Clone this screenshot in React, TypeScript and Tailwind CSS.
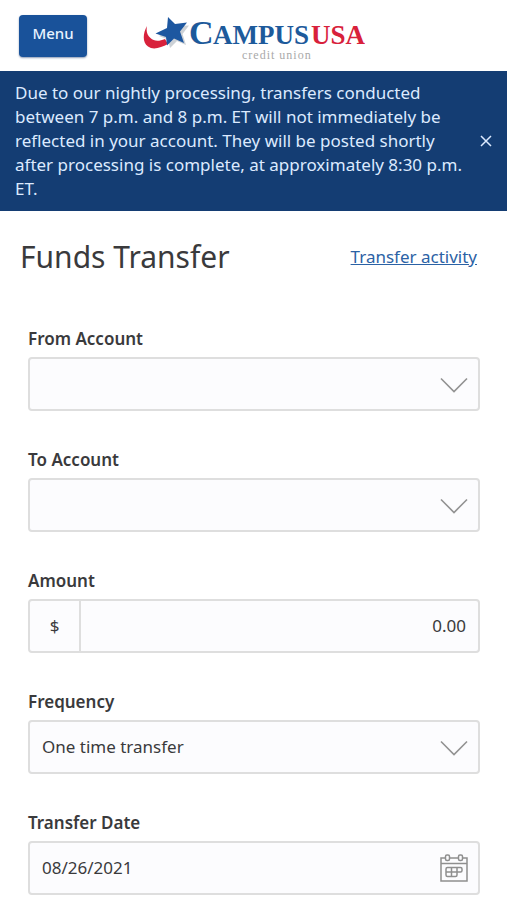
import { useState } from "react";
import type { ReactNode } from "react";

const boxClass =
  "flex h-[54px] w-full rounded-sm border-2 border-[#dedede] bg-[#fcfcfe]";

function Logo() {
  return (
    <svg
      width="222"
      height="54"
      viewBox="0 -2 222 54"
      role="img"
      aria-label="Campus USA credit union"
    >
      <path
        d="M4 15C0 22 -1 31 5 35.500C10.500 39.500 18 36.500 25 33L22 28C16 30.500 11 30.500 7.500 27C4 24 3 20 4 15Z"
        fill="#d8213b"
      />
      <path
        d="M27 9L34.500 15L46 14.500L39.500 23L43 34L34 30L27 37L25 28.500L16 25L26 19Z"
        fill="#9aa3ad"
        opacity="0.5"
      />
      <path
        d="M25 6L32 13L44 11.500L37 20.500L41 32L31 27.500L24 34.500L23 26L12.500 22.500L24 17Z"
        fill="#1d57a0"
      />
      <text
        x="46"
        y="33"
        fill="#1d5a9b"
        className="font-['Liberation_Serif',serif] text-[34px] font-bold"
      >
        C
      </text>
      <text
        x="70"
        y="33"
        fill="#1d5a9b"
        className="font-['Liberation_Serif',serif] text-[27px] font-bold"
      >
        AMPUS
      </text>
      <text
        x="168"
        y="33"
        fill="#d8213b"
        className="font-['Liberation_Serif',serif] text-[27px] font-bold"
      >
        USA
      </text>
      <text
        x="99"
        y="48"
        fill="#a9a9a9"
        className="font-['Liberation_Serif',serif] text-[12px] tracking-[1px]"
      >
        credit union
      </text>
    </svg>
  );
}

function Chevron() {
  return (
    <svg
      className="pointer-events-none absolute top-5 right-3"
      width="28"
      height="16"
      viewBox="0 0 28 16"
      fill="none"
      stroke="#929292"
      strokeWidth="1.6"
      aria-hidden="true"
    >
      <path d="M1 1.500L14 14.500L27 1.500" />
    </svg>
  );
}

function CalendarIcon() {
  return (
    <svg
      width="28"
      height="28"
      viewBox="0 0 28 28"
      fill="none"
      stroke="#8f8f8f"
      strokeWidth="1.5"
      aria-hidden="true"
    >
      <path d="M5.500 4H1V27H27V4H22.500M9.500 4H18.500M1 9.500H27" />
      <rect x="5.500" y="1" width="4" height="5.500" rx="1.500" />
      <rect x="18.500" y="1" width="4" height="5.500" rx="1.500" />
      <path d="M7.500 13.500H20.500Q22 13.500 22 15V16.500Q22 18 20.500 18H17V21Q17 22.500 15.500 22.500H7.500Q6 22.500 6 21V15Q6 13.500 7.500 13.500ZM6 18H17M11.500 13.500V22.500M17 13.500V18" />
    </svg>
  );
}

function Field({ id, label, children }: { id: string; label: string; children: ReactNode }) {
  return (
    <div className="flex flex-col gap-1.5">
      <label htmlFor={id} className="text-[17px] leading-6 font-semibold">
        {label}
      </label>
      {children}
    </div>
  );
}

function SelectField({ id, label, options }: { id: string; label: string; options: string[] }) {
  return (
    <Field id={id} label={label}>
      <div className="relative">
        <select id={id} className={`${boxClass} appearance-none pr-12 pl-3 text-[17px]`}>
          {options.map((option) => (
            <option key={option}>{option}</option>
          ))}
        </select>
        <Chevron />
      </div>
    </Field>
  );
}

export default function App() {
  const [showNotice, setShowNotice] = useState(true);

  return (
    <div className="bg-white font-['Noto_Sans',sans-serif] text-[#3a3a3c]">
      <header className="grid h-[71px] grid-cols-[1fr_auto_1fr] items-center px-[19px]">
        <button
          type="button"
          className="h-[42px] w-[68px] justify-self-start rounded-sm bg-[#19529a] pb-1 text-[15px] font-medium text-[#e8f2ff] shadow-[0_1px_2px_#8c9bb5]"
        >
          Menu
        </button>
        <Logo />
      </header>

      {showNotice && (
        <div className="flex items-center justify-between bg-[#143d73] py-2.5 pr-3 pl-[15px] text-[#dceaff]">
          <p className="max-w-[452px] text-[17px] leading-6">
            Due to our nightly processing, transfers conducted between 7 p.m. and 8 p.m. ET will
            not immediately be reflected in your account. They will be posted shortly after
            processing is complete, at approximately 8:30 p.m. ET.
          </p>
          <button
            type="button"
            aria-label="Dismiss"
            onClick={() => setShowNotice(false)}
            className="flex h-6 w-[18px] shrink-0 items-center justify-center"
          >
            <svg width="12" height="12" viewBox="0 0 12 12" stroke="currentColor" strokeWidth="1.5">
              <path d="M1 1L11 11M11 1L1 11" />
            </svg>
          </button>
        </div>
      )}

      <main>
        <div className="flex items-center justify-between pt-6 pr-[30px] pl-5">
          <h1 className="text-[30px] leading-11">Funds Transfer</h1>
          <a href="#activity" className="text-[17px] leading-6 text-[#2b62a5] underline">
            Transfer activity
          </a>
        </div>

        <form className="flex flex-col gap-[37px] pt-12 pr-[27px] pl-7">
          <SelectField id="from" label="From Account" options={[""]} />
          <SelectField id="to" label="To Account" options={[""]} />
          <Field id="amount" label="Amount">
            <div className={boxClass}>
              <span className="flex w-[51px] shrink-0 items-center justify-center border-r-2 border-[#dedede] text-[17px]">
                $
              </span>
              <input
                id="amount"
                type="text"
                inputMode="decimal"
                defaultValue="0.00"
                className="w-full min-w-0 px-3 text-right text-[17px]"
              />
            </div>
          </Field>
          <SelectField id="frequency" label="Frequency" options={["One time transfer"]} />
          <Field id="date" label="Transfer Date">
            <div className={`${boxClass} items-center pr-2.5`}>
              <input
                id="date"
                type="text"
                defaultValue="08/26/2021"
                className="w-full min-w-0 px-3 text-[17px]"
              />
              <button type="button" aria-label="Choose date" className="shrink-0">
                <CalendarIcon />
              </button>
            </div>
          </Field>
        </form>
      </main>
    </div>
  );
}
